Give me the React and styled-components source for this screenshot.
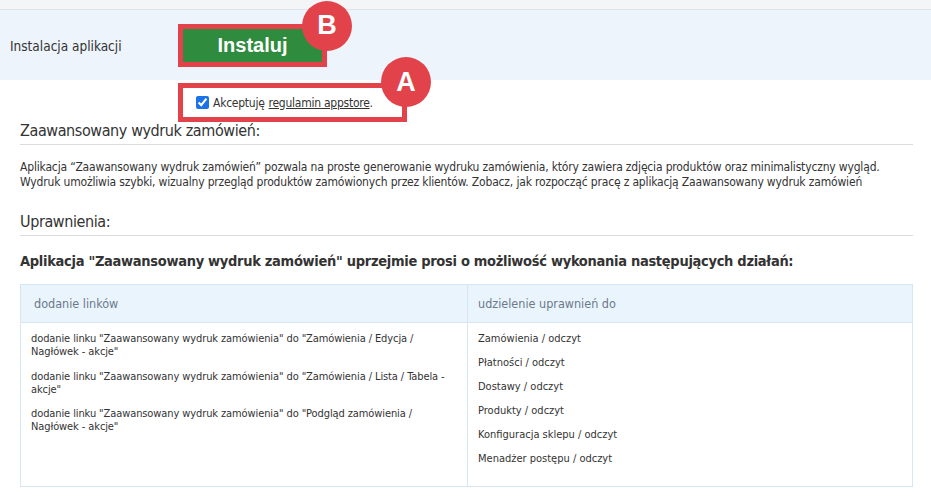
import React from "react";
import styled, { createGlobalStyle } from "styled-components";

const Global = createGlobalStyle`
  html, body { margin: 0; padding: 0; background: #fff; }
  body { font-family: Tahoma, "DejaVu Sans Condensed", "DejaVu Sans", sans-serif; color: #333; }
  * { box-sizing: border-box; }
`;

const Page = styled.div`
  width: 931px;
  min-height: 496px;
  background: #fff;
`;

const TopStrip = styled.div`
  height: 10px;
  background: #f4f5f7;
  border-bottom: 1px solid #dfe3e8;
`;

const InstallBar = styled.div`
  height: 70px;
  background: #edf4fb;
  display: flex;
  align-items: center;
  padding-left: 10px;
`;

const BarLabel = styled.div`
  width: 173px;
  font-size: 13.5px;
  color: #333;
  padding-top: 2px;
`;

const Annotated = styled.div`
  position: relative;
  outline: 5px solid #e2434b;
  display: ${(p) => (p.$inline ? "inline-flex" : "flex")};
`;

const InstallButton = styled.button`
  width: 139px;
  height: 33px;
  border: none;
  background: #2f8b3d;
  color: #fff;
  font-family: "Liberation Sans", Arial, sans-serif;
  font-weight: 700;
  font-size: 20px;
  padding: 0;
  cursor: pointer;
`;

const Badge = styled.div`
  position: absolute;
  left: ${(p) => p.$left}px;
  top: ${(p) => p.$top}px;
  width: 50px;
  height: 50px;
  border-radius: 50%;
  background: #e2434b;
  color: #fff;
  font-family: "Liberation Sans", Arial, sans-serif;
  font-weight: 700;
  font-size: 27px;
  display: flex;
  align-items: center;
  justify-content: center;
`;

const AcceptWrap = styled.div`
  padding: 8px 0 0 183px;
`;

const AcceptBox = styled.label`
  width: 219px;
  height: 29px;
  display: flex;
  align-items: center;
  padding-left: 13px;
  font-size: 12px;
  letter-spacing: -0.25px;
  color: #333;
`;

const Check = styled.input`
  width: 13px;
  height: 13px;
  margin: 0 4px 0 0;
  accent-color: #1a73e8;
`;

const Link = styled.a`
  color: #333;
  text-decoration: underline;
  margin-left: 4px;
`;

const Content = styled.div`
  padding: 4px 18px 0 20px;
`;

const SectionTitle = styled.h2`
  margin: ${(p) => p.$mt || 0}px 0 0;
  font-weight: 400;
  font-size: 16px;
  letter-spacing: -0.4px;
  line-height: 20px;
  color: #333;
  padding-bottom: 3px;
  border-bottom: 1px solid #dcdcdc;
`;

const Description = styled.p`
  margin: 15px 0 0;
  font-size: 12px;
  letter-spacing: -0.17px;
  line-height: 15px;
  color: #333;
`;

const Lead = styled.h3`
  margin: 15px 0 0;
  font-size: 14.5px;
  letter-spacing: -0.3px;
  line-height: 20px;
  font-weight: 700;
  color: #333;
`;

const Table = styled.div`
  margin-top: 13px;
  border: 1px solid #d6e6f4;
  display: grid;
  grid-template-columns: 446px 1fr;
`;

const HeadCell = styled.div`
  background: #eaf4fd;
  height: 38px;
  display: flex;
  align-items: center;
  padding-left: ${(p) => p.$pl}px;
  font-size: 12.5px;
  color: #6b7a8a;
  border-bottom: 1px solid #d6e6f4;
  border-left: ${(p) => (p.$divider ? "1px solid #d6e6f4" : "none")};
`;

const BodyCell = styled.div`
  padding: ${(p) => p.$pt}px ${(p) => p.$pr}px 10px ${(p) => p.$pl}px;
  border-left: ${(p) => (p.$divider ? "1px solid #d6e6f4" : "none")};
  min-height: 162px;
`;

const LinkItem = styled.p`
  margin: 0 0 11.5px;
  font-size: 11px;
  letter-spacing: -0.1px;
  line-height: 13px;
  color: #333;
`;

const PermItem = styled.div`
  margin-bottom: 11px;
  font-size: 11px;
  line-height: 13px;
  color: #333;
`;

const links = [
  'dodanie linku "Zaawansowany wydruk zamówienia" do "Zamówienia / Edycja / Nagłówek - akcje"',
  'dodanie linku "Zaawansowany wydruk zamówienia" do "Zamówienia / Lista / Tabela - akcje"',
  'dodanie linku "Zaawansowany wydruk zamówienia" do "Podgląd zamówienia / Nagłówek - akcje"',
];

const perms = [
  "Zamówienia / odczyt",
  "Płatności / odczyt",
  "Dostawy / odczyt",
  "Produkty / odczyt",
  "Konfiguracja sklepu / odczyt",
  "Menadżer postępu / odczyt",
];

export default function App() {
  return (
    <Page>
      <Global />
      <TopStrip />
      <InstallBar>
        <BarLabel>Instalacja aplikacji</BarLabel>
        <Annotated>
          <InstallButton>Instaluj</InstallButton>
          <Badge $left={119} $top={-28}>B</Badge>
        </Annotated>
      </InstallBar>
      <AcceptWrap>
        <Annotated $inline>
          <AcceptBox>
            <Check type="checkbox" defaultChecked />
            Akceptuję<Link href="#">regulamin appstore</Link>.
          </AcceptBox>
          <Badge $left={198} $top={-31}>A</Badge>
        </Annotated>
      </AcceptWrap>
      <Content>
        <SectionTitle>Zaawansowany wydruk zamówień:</SectionTitle>
        <Description>
          Aplikacja “Zaawansowany wydruk zamówień” pozwala na proste generowanie wydruku zamówienia, który zawiera zdjęcia produktów oraz minimalistyczny wygląd.
          <br />
          Wydruk umożliwia szybki, wizualny przegląd produktów zamówionych przez klientów. Zobacz, jak rozpocząć pracę z aplikacją Zaawansowany wydruk zamówień
        </Description>
        <SectionTitle $mt={22}>Uprawnienia:</SectionTitle>
        <Lead>Aplikacja "Zaawansowany wydruk zamówień" uprzejmie prosi o możliwość wykonania następujących działań:</Lead>
        <Table>
          <HeadCell $pl={13}>dodanie linków</HeadCell>
          <HeadCell $pl={10} $divider>udzielenie uprawnień do</HeadCell>
          <BodyCell $pt={9} $pl={10} $pr={18}>
            {links.map((l) => (
              <LinkItem key={l}>{l}</LinkItem>
            ))}
          </BodyCell>
          <BodyCell $pt={9} $pl={10} $pr={10} $divider>
            {perms.map((p) => (
              <PermItem key={p}>{p}</PermItem>
            ))}
          </BodyCell>
        </Table>
      </Content>
    </Page>
  );
}
